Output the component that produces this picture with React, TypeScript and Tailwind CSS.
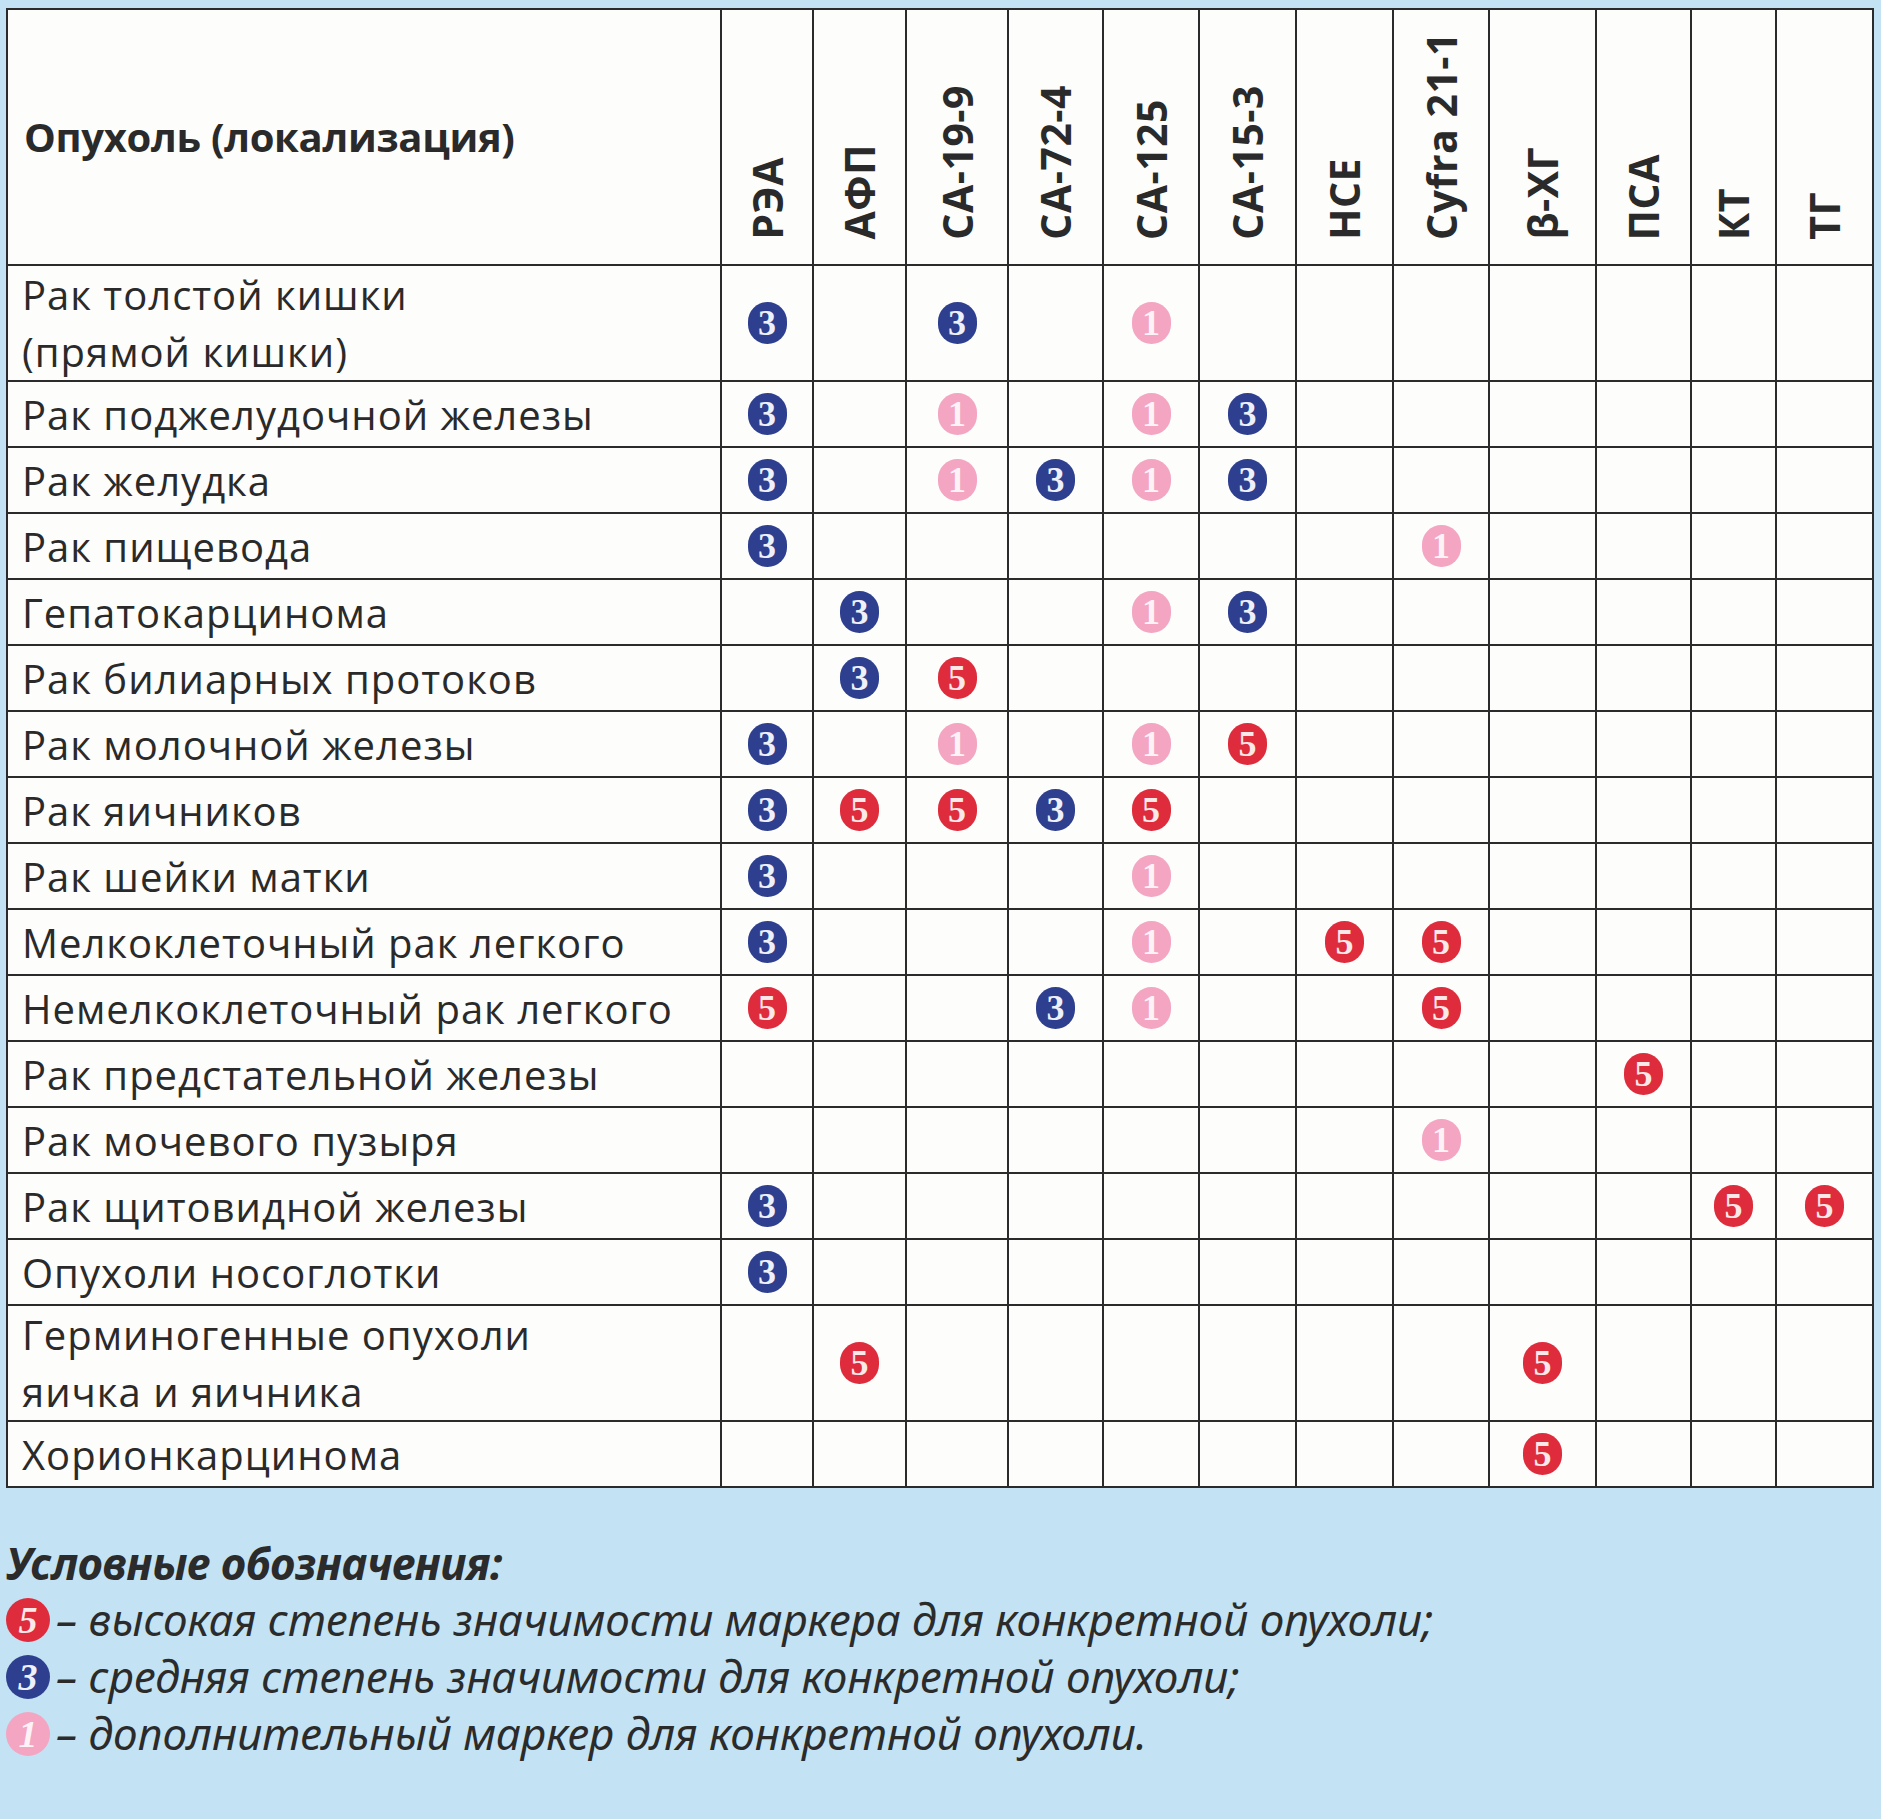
import React from "react";

type Mark = 0 | 1 | 3 | 5;

const markers = ["РЭА", "АФП", "CA-19-9", "CA-72-4", "CA-125", "CA-15-3", "НСЕ", "Cyfra 21-1", "β-ХГ", "ПСА", "КТ", "ТГ"];
const colWidths = [92, 93, 102, 95, 96, 97, 97, 96, 107, 95, 85, 97];

// order of marks follows the markers above
const rows: { name: string[]; marks: Mark[] }[] = [
  { name: ["Рак толстой кишки", "(прямой кишки)"], marks: [3, 0, 3, 0, 1, 0, 0, 0, 0, 0, 0, 0] },
  { name: ["Рак поджелудочной железы"], marks: [3, 0, 1, 0, 1, 3, 0, 0, 0, 0, 0, 0] },
  { name: ["Рак желудка"], marks: [3, 0, 1, 3, 1, 3, 0, 0, 0, 0, 0, 0] },
  { name: ["Рак пищевода"], marks: [3, 0, 0, 0, 0, 0, 0, 1, 0, 0, 0, 0] },
  { name: ["Гепатокарцинома"], marks: [0, 3, 0, 0, 1, 3, 0, 0, 0, 0, 0, 0] },
  { name: ["Рак билиарных протоков"], marks: [0, 3, 5, 0, 0, 0, 0, 0, 0, 0, 0, 0] },
  { name: ["Рак молочной железы"], marks: [3, 0, 1, 0, 1, 5, 0, 0, 0, 0, 0, 0] },
  { name: ["Рак яичников"], marks: [3, 5, 5, 3, 5, 0, 0, 0, 0, 0, 0, 0] },
  { name: ["Рак шейки матки"], marks: [3, 0, 0, 0, 1, 0, 0, 0, 0, 0, 0, 0] },
  { name: ["Мелкоклеточный рак легкого"], marks: [3, 0, 0, 0, 1, 0, 5, 5, 0, 0, 0, 0] },
  { name: ["Немелкоклеточный рак легкого"], marks: [5, 0, 0, 3, 1, 0, 0, 5, 0, 0, 0, 0] },
  { name: ["Рак предстательной железы"], marks: [0, 0, 0, 0, 0, 0, 0, 0, 0, 5, 0, 0] },
  { name: ["Рак мочевого пузыря"], marks: [0, 0, 0, 0, 0, 0, 0, 1, 0, 0, 0, 0] },
  { name: ["Рак щитовидной железы"], marks: [3, 0, 0, 0, 0, 0, 0, 0, 0, 0, 5, 5] },
  { name: ["Опухоли носоглотки"], marks: [3, 0, 0, 0, 0, 0, 0, 0, 0, 0, 0, 0] },
  { name: ["Герминогенные опухоли", "яичка и яичника"], marks: [0, 5, 0, 0, 0, 0, 0, 0, 5, 0, 0, 0] },
  { name: ["Хорионкарцинома"], marks: [0, 0, 0, 0, 0, 0, 0, 0, 5, 0, 0, 0] },
];

function Badge({ value, big }: { value: Mark; big?: boolean }) {
  const color =
    value === 5 ? "bg-[#de2c3c] text-[#fbe9ea]" : value === 3 ? "bg-[#2d3f8e] text-[#eef0fa]" : "bg-[#f3a5c2] text-[#fdf3f7]";
  return (
    <span
      className={`inline-flex items-center justify-center rounded-full font-['Liberation_Serif',serif] font-semibold leading-none ${color} ${
        big ? "h-[44px] w-[44px] text-[38px]" : "h-[42px] w-[39px] text-[36px]"
      }`}
    >
      {value}
    </span>
  );
}

export default function App() {
  return (
    <div className="min-h-[1819px] w-[1881px] bg-[#c3e3f4] pl-[6px] pt-[8px] font-['Open_Sans',sans-serif] text-[#2a2a2a]">
      <table className="table-fixed border-collapse bg-[#fdfdfc]">
        <colgroup>
          <col className="w-[714px]" />
          {colWidths.map((w, i) => (
            <col key={i} style={{ width: w }} />
          ))}
        </colgroup>
        <thead>
          <tr className="h-[256px]">
            <th className="border-[2px] border-[#2b2b2b] pl-[16px] text-left align-middle text-[40px] font-bold tracking-[-0.3px]">
              Опухоль (локализация)
            </th>
            {markers.map((m) => (
              <th key={m} className="border-[2px] border-[#2b2b2b] pb-[18px] align-bottom">
                <span className="inline-block rotate-180 whitespace-nowrap text-[41px] font-bold leading-none tracking-[0.5px] [writing-mode:vertical-rl]">
                  {m}
                </span>
              </th>
            ))}
          </tr>
        </thead>
        <tbody>
          {rows.map((r, i) => (
            <tr key={i} className={r.name.length > 1 ? "h-[116px]" : "h-[66px]"}>
              <td className="border-[2px] border-[#2b2b2b] pl-[14px] align-middle text-[40px] leading-[57px] tracking-[1px]">
                {r.name.map((line) => (
                  <div key={line}>{line}</div>
                ))}
              </td>
              {r.marks.map((v, j) => (
                <td key={j} className="border-[2px] border-[#2b2b2b] text-center align-middle">
                  {v !== 0 && <Badge value={v} />}
                </td>
              ))}
            </tr>
          ))}
        </tbody>
      </table>

      <div className="mt-[47px] font-['Noto_Sans',sans-serif] italic text-[#2b2b2b]">
        <div className="text-[44px] font-bold leading-[56px] tracking-[-0.3px]">Условные обозначения:</div>
        <div className="flex items-center gap-[6px] text-[44px] leading-[57px] tracking-[0px]">
          <Badge value={5} big />
          <span>– высокая степень значимости маркера для конкретной опухоли;</span>
        </div>
        <div className="flex items-center gap-[6px] text-[44px] leading-[57px] tracking-[0px]">
          <Badge value={3} big />
          <span>– средняя степень значимости для конкретной опухоли;</span>
        </div>
        <div className="flex items-center gap-[6px] text-[44px] leading-[57px] tracking-[0px]">
          <Badge value={1} big />
          <span>– дополнительный маркер для конкретной опухоли.</span>
        </div>
      </div>
    </div>
  );
}
